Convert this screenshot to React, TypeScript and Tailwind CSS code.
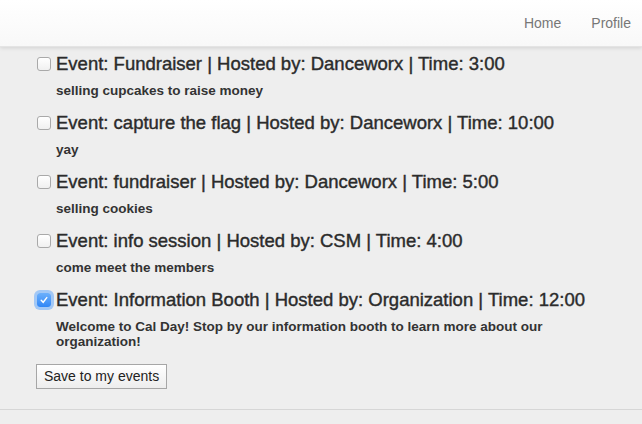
import React, { useState } from "react";

type EventItem = {
  name: string;
  host: string;
  time: string;
  desc: string;
};

const events: EventItem[] = [
  { name: "Fundraiser", host: "Danceworx", time: "3:00", desc: "selling cupcakes to raise money" },
  { name: "capture the flag", host: "Danceworx", time: "10:00", desc: "yay" },
  { name: "fundraiser", host: "Danceworx", time: "5:00", desc: "selling cookies" },
  { name: "info session", host: "CSM", time: "4:00", desc: "come meet the members" },
  {
    name: "Information Booth",
    host: "Organization",
    time: "12:00",
    desc: "Welcome to Cal Day! Stop by our information booth to learn more about our organization!",
  },
];

const Box: React.FC<{ checked: boolean; onClick: () => void }> = ({ checked, onClick }) =>
  checked ? (
    <span
      onClick={onClick}
      className="flex h-[14px] w-[14px] items-center justify-center rounded-[3px] bg-gradient-to-b from-[#6cb0fb] to-[#2f86f6] ring-[3px] ring-[#8fbef7]/80"
    >
      <svg width="10" height="10" viewBox="0 0 10 10">
        <path d="M2.2 5.2 L4.2 7.3 L7.8 2.6" fill="none" stroke="white" strokeWidth="1.4" strokeLinecap="round" />
      </svg>
    </span>
  ) : (
    <span
      onClick={onClick}
      className="block h-[14px] w-[14px] rounded-[3px] border border-[#a9a9a9] bg-gradient-to-b from-white to-[#f0f0f0]"
    />
  );

export default function App() {
  const [checked, setChecked] = useState<boolean[]>([false, false, false, false, true]);

  return (
    <div className="min-h-[424px] bg-[#eeeeee] text-[#333333]" style={{ fontFamily: '"Liberation Sans", Arial, sans-serif' }}>
      <nav className="flex h-[47px] items-center justify-end bg-gradient-to-b from-white to-[#f8f8f8] pr-[11px] shadow-[0_1px_4px_rgba(0,0,0,0.12)] border-b border-[#e4e4e4]">
        <a className="text-[14px] text-[#777777] mr-[30px]">Home</a>
        <a className="text-[14px] text-[#777777]">Profile</a>
      </nav>

      <div className="pl-[36px] pr-[40px] pt-[6px]">
        {events.map((e, i) => (
          <div key={i} className={i > 0 ? "mt-[14px]" : ""}>
            <div className="flex h-[22px] items-center">
              <span className="w-[20px] pl-[1px]">
                <Box
                  checked={checked[i]}
                  onClick={() => setChecked(checked.map((c, j) => (j === i ? !c : c)))}
                />
              </span>
              <span className="text-[18.5px] leading-[22px] text-[#2b2b2b] [-webkit-text-stroke:0.4px_#2b2b2b]">
                Event: {e.name} | Hosted by: {e.host} | Time: {e.time}
              </span>
            </div>
            <p className="mt-[8px] ml-[20px] max-w-[520px] text-[13.5px] font-bold leading-[15px] text-[#333333]">{e.desc}</p>
          </div>
        ))}

        <button className="mt-[15px] h-[25px] border border-[#a6a6a6] bg-gradient-to-b from-white to-[#ededed] px-[7px] text-[14px] text-[#222]">
          Save to my events
        </button>
      </div>

      <div className="mt-[20px] border-t border-[#d6d6d6]" />
    </div>
  );
}
